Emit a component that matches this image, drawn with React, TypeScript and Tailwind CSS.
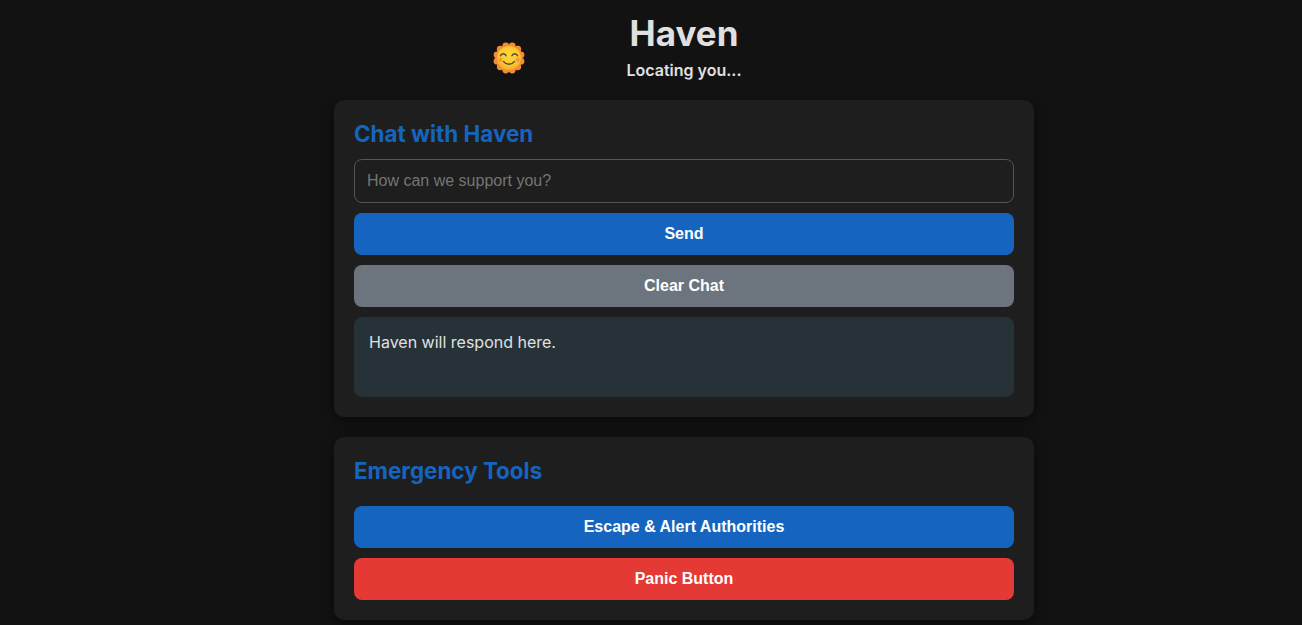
const petals = Array.from({ length: 12 }, (_, i) => {
  const a = ((i + 0.5) / 12) * Math.PI * 2;
  return { cx: 16 + Math.cos(a) * 12.4, cy: 16 + Math.sin(a) * 12.4 };
});

function SunIcon() {
  return (
    <svg width="32" height="32" viewBox="0 0 32 32" fill="none">
      <defs>
        <radialGradient id="face" cx="50%" cy="38%" r="62%">
          <stop offset="0%" stopColor="#ffd83b" />
          <stop offset="70%" stopColor="#fcc62e" />
          <stop offset="100%" stopColor="#f8a92f" />
        </radialGradient>
      </defs>
      <circle cx="16" cy="16" r="13.4" fill="#f58b32" />
      {petals.map((p, i) => (
        <circle key={i} cx={p.cx} cy={p.cy} r="3.4" fill="#f58b32" />
      ))}
      <circle cx="16" cy="16" r="12" fill="url(#face)" />
      <circle cx="7.4" cy="17.8" r="2.1" fill="#f58b4a" opacity="0.75" />
      <circle cx="24.6" cy="17.8" r="2.1" fill="#f58b4a" opacity="0.75" />
      <path d="M7.4 13.8c1-2.8 4.7-2.8 5.7 0" stroke="#4f4a45" strokeWidth="1.4" strokeLinecap="round" />
      <path d="M18.9 13.8c1-2.8 4.7-2.8 5.7 0" stroke="#4f4a45" strokeWidth="1.4" strokeLinecap="round" />
      <path d="M10.6 19.6c2.7 3.4 8.1 3.4 10.8 0" stroke="#4f4a45" strokeWidth="1.5" strokeLinecap="round" />
    </svg>
  );
}

export default function App() {
  return (
    <div className="h-[625px] overflow-hidden bg-[#121212] pl-[66px] font-['Inter',sans-serif] text-[#e0e0e0]">
      <header className="relative flex flex-col items-center pt-[13px]">
        <span className="absolute left-[427px] top-[42px]"><SunIcon /></span>
        <h1 className="text-[35px] leading-[40px] font-bold">Haven</h1>
        <p className="mt-[5px] text-base leading-[24px] font-semibold">Locating you...</p>
      </header>
      <main className="mx-auto mt-[18px] flex w-[700px] flex-col gap-5">
        <section className="rounded-[10px] bg-[#1e1e1e] p-5 shadow-[0_4px_12px_rgba(0,0,0,0.5)]">
          <h2 className="text-[22.4px] leading-[28px] font-bold text-[#1565c0]">Chat with Haven</h2>
          <input
            placeholder="How can we support you?"
            className="mt-[11px] block h-11 w-full rounded-lg border border-[#555] bg-[#1e1e1e] px-3 font-['Liberation_Sans',sans-serif] text-base placeholder:text-[#757575]"
          />
          <button className="mt-[10px] block h-[42px] w-full rounded-lg bg-[#1565c0] font-['Liberation_Sans',sans-serif] text-base font-bold text-white">Send</button>
          <button className="mt-[10px] block h-[42px] w-full rounded-lg bg-[#6c757d] font-['Liberation_Sans',sans-serif] text-base font-bold text-white">Clear Chat</button>
          <div className="mt-[10px] h-20 rounded-lg bg-[#263238] px-[15px] py-[12px] text-base leading-[26px]">Haven will respond here.</div>
        </section>
        <section className="rounded-[10px] bg-[#1e1e1e] p-5 shadow-[0_4px_12px_rgba(0,0,0,0.5)]">
          <h2 className="text-[22.4px] leading-[28px] font-bold text-[#1565c0]">Emergency Tools</h2>
          <button className="mt-[21px] block h-[42px] w-full rounded-lg bg-[#1565c0] font-['Liberation_Sans',sans-serif] text-base font-bold text-white">Escape &amp; Alert Authorities</button>
          <button className="mt-[10px] block h-[42px] w-full rounded-lg bg-[#e53935] font-['Liberation_Sans',sans-serif] text-base font-bold text-white">Panic Button</button>
        </section>
      </main>
    </div>
  );
}
